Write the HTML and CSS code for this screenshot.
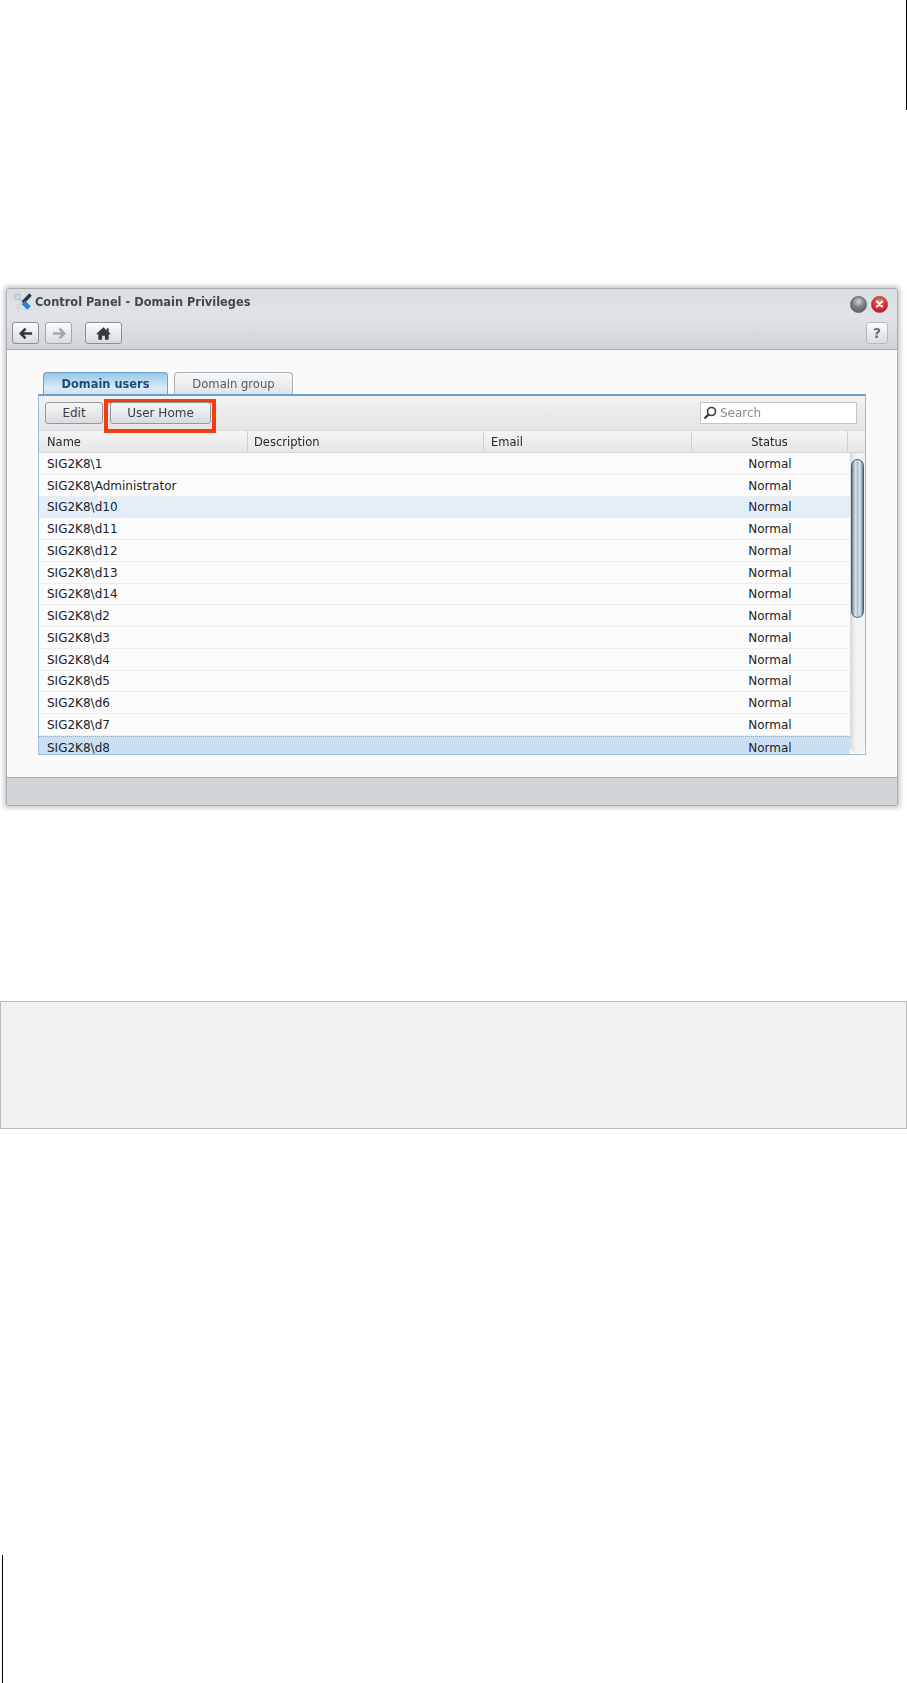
FILE: index.html
```html
<!DOCTYPE html>
<html lang="en">
<head>
<meta charset="utf-8">
<title>Control Panel - Domain Privileges</title>
<link rel="stylesheet" href="styles.css">
</head>
<body>
<div class="top-rule"></div>
<section class="window">
  <header class="chrome">
    <div class="titlebar">
      <svg class="app-icon" viewBox="0 0 18 18" width="18" height="18">
        <path d="M2.500 16.500L8 10.500" stroke="#d5d9dc" stroke-width="2.600" fill="none"/>
        <circle cx="3.800" cy="3.800" r="2.700" fill="none" stroke="#c2c7cb" stroke-width="1.800"/>
        <path d="M5.500 5.500L11 11" stroke="#c8ccd0" stroke-width="2.600"/>
        <path d="M16.500 1.500L9 9.500" stroke="#2e343a" stroke-width="3.400"/>
        <path d="M9.500 9.500L15 15" stroke="#2f7fd0" stroke-width="5"/>
      </svg>
      <span class="title">Control Panel - Domain Privileges</span>
      <span class="orb orb-grey"></span>
      <span class="orb orb-red">
        <svg viewBox="0 0 16 16" width="16" height="16"><path d="M5.200 5.200l5.600 5.600M10.800 5.200l-5.600 5.600" stroke="#fff" stroke-width="2.200" stroke-linecap="round"/></svg>
      </span>
    </div>
    <div class="navbar">
      <button class="nav-btn">
        <svg viewBox="0 0 16 14" width="14" height="13"><path d="M7.500 1.500L2 7l5.500 5.500M2.500 7H15" fill="none" stroke="#33373b" stroke-width="3"/></svg>
      </button>
      <button class="nav-btn nav-off">
        <svg viewBox="0 0 16 14" width="14" height="13"><path d="M8.500 1.500L14 7l-5.500 5.500M13.500 7H1" fill="none" stroke="#a3a8ac" stroke-width="3"/></svg>
      </button>
      <button class="nav-btn nav-home">
        <svg viewBox="0 0 18 15" width="17" height="15"><path d="M9 1L1 8.300h2.500V14h4v-4h3v4h4V8.300H17l-2.500-2.300V2h-2v2.200z" fill="#35393d"/></svg>
      </button>
      <button class="nav-btn nav-help">?</button>
    </div>
  </header>
  <div class="content">
    <div class="tabs">
      <span class="tab tab-on">Domain users</span>
      <span class="tab">Domain group</span>
    </div>
    <div class="panel">
      <div class="toolbar">
        <button class="tool-btn btn-edit">Edit</button>
        <span class="highlight"><button class="tool-btn btn-home">User Home</button></span>
        <label class="search">
          <svg viewBox="0 0 14 14" width="14" height="14"><circle cx="8.500" cy="5.500" r="4" fill="none" stroke="#3c4044" stroke-width="1.700"/><path d="M5.500 8.500L1.500 12.500" stroke="#3c4044" stroke-width="2.400"/></svg>
          <span>Search</span>
        </label>
      </div>
      <div class="grid-head">
        <span class="col col-name">Name</span>
        <span class="col col-desc">Description</span>
        <span class="col col-mail">Email</span>
        <span class="col col-status">Status</span>
        <span class="col col-end"></span>
      </div>
      <div class="grid-body">
        <div class="rows">
          <div class="row"><span class="cell-name">SIG2K8\1</span><span class="cell-status">Normal</span></div>
          <div class="row"><span class="cell-name">SIG2K8\Administrator</span><span class="cell-status">Normal</span></div>
          <div class="row row-hover"><span class="cell-name">SIG2K8\d10</span><span class="cell-status">Normal</span></div>
          <div class="row"><span class="cell-name">SIG2K8\d11</span><span class="cell-status">Normal</span></div>
          <div class="row"><span class="cell-name">SIG2K8\d12</span><span class="cell-status">Normal</span></div>
          <div class="row"><span class="cell-name">SIG2K8\d13</span><span class="cell-status">Normal</span></div>
          <div class="row"><span class="cell-name">SIG2K8\d14</span><span class="cell-status">Normal</span></div>
          <div class="row"><span class="cell-name">SIG2K8\d2</span><span class="cell-status">Normal</span></div>
          <div class="row"><span class="cell-name">SIG2K8\d3</span><span class="cell-status">Normal</span></div>
          <div class="row"><span class="cell-name">SIG2K8\d4</span><span class="cell-status">Normal</span></div>
          <div class="row"><span class="cell-name">SIG2K8\d5</span><span class="cell-status">Normal</span></div>
          <div class="row"><span class="cell-name">SIG2K8\d6</span><span class="cell-status">Normal</span></div>
          <div class="row"><span class="cell-name">SIG2K8\d7</span><span class="cell-status">Normal</span></div>
          <div class="row row-selected"><span class="cell-name">SIG2K8\d8</span><span class="cell-status">Normal</span></div>
        </div>
        <div class="scrollbar"><div class="thumb"></div></div>
      </div>
    </div>
  </div>
  <footer class="statusbar"></footer>
</section>
<div class="note"></div>
<div class="bottom-rule"></div>
</body>
</html>
```
FILE: styles.css
```css
* { box-sizing: border-box; }
html, body { margin: 0; padding: 0; }
body {
  width: 907px;
  height: 1683px;
  background: #fff;
  overflow: hidden;
  font-family: "DejaVu Sans", Verdana, sans-serif;
  color: #1f2328;
  display: flex;
  flex-direction: column;
}
.top-rule {
  width: 1px;
  height: 110px;
  margin: 0 0 0 906px;
  background: #000;
  flex: none;
}
.window {
  flex: none;
  width: 892px;
  height: 518px;
  margin: 178px 0 0 6px;
  border: 1px solid #a9adb0;
  border-radius: 3px 3px 2px 2px;
  box-shadow: 0 0 5px 2px rgba(90, 90, 90, .35);
  background: #fafafa;
  display: flex;
  flex-direction: column;
  overflow: hidden;
  filter: blur(.35px);
}
.chrome {
  flex: none;
  height: 61px;
  padding: 0 9px 0 5px;
  background: linear-gradient(#d8dde1, #e0e4e8 45%, #d0d4d8);
  border-bottom: 1px solid #a8acb0;
}
.titlebar { height: 25px; display: flex; align-items: center; }
.app-icon { margin: 0 3px 0 2px; flex: none; }
.title { font-size: 11.4px; font-weight: bold; color: #40474f; flex: 1; }
.orb {
  width: 17px; height: 17px; border-radius: 50%;
  display: flex; align-items: center; justify-content: center;
  margin-left: 4px; margin-top: 5px;
}
.orb-grey {
  background: radial-gradient(circle at 50% 30%, #d0d4d6, #7b8083 45%, #53585c);
  border: 1px solid #62676a;
}
.orb-red {
  background: radial-gradient(circle at 50% 30%, #ef7b7b, #cc2b2b 60%, #a01c1c);
  border: 1px solid #b43a3a;
}
.navbar { display: flex; align-items: flex-start; gap: 6px; margin-top: 8px; }
.nav-btn {
  width: 27px; height: 22px; padding: 0;
  display: flex; align-items: center; justify-content: center;
  background: linear-gradient(#fafbfb, #d9dcdf);
  border: 1px solid #8b8f93;
  border-radius: 3px;
  font-family: inherit;
}
.nav-off { border-color: #a3a7ab; }
.nav-home { width: 37px; margin-left: 7px; }
.nav-help {
  width: 22px; margin-left: auto;
  border-color: #b7bbbf; color: #666b70;
  font-size: 14px; font-weight: bold;
}
.content { flex: 1; padding: 22px 31px 22px 31px; display: flex; flex-direction: column; min-height: 0; }
.tabs { flex: none; height: 22px; display: flex; align-items: flex-end; gap: 6px; padding-left: 5px; }
.tab {
  height: 22px; width: 119px;
  display: flex; align-items: center; justify-content: center;
  font-size: 11.6px; color: #555c63;
  background: linear-gradient(#f7f8f9, #dfe3e7);
  border: 1px solid #a9b0b6; border-bottom: none;
  border-radius: 4px 4px 0 0;
}
.tab-on {
  width: 125px;
  font-size: 11.4px;
  font-weight: bold; color: #1f4a76;
  background: linear-gradient(#98c6e8, #d9eaf6 70%, #cfe3f3);
  border-color: #6ea0c8;
}
.panel {
  flex: 1; min-height: 0;
  border: 1px solid #9dbcd8;
  border-top: 2px solid #6f9fc8;
  background: #fff;
  display: flex; flex-direction: column;
  overflow: hidden;
}
.toolbar {
  flex: none; height: 34px;
  padding: 6px 8px 0 6px;
  display: flex; align-items: flex-start;
  background: linear-gradient(#f2f2f3, #e4e4e6);
}
.tool-btn {
  height: 22px; padding: 0;
  font-family: inherit; font-size: 12px; color: #3c4147;
  background: linear-gradient(#f4f5f6, #d9dcdf);
  border: 1px solid #94989c;
  border-radius: 3px;
}
.btn-edit { width: 58px; }
.highlight {
  flex: none;
  margin: -3px 0 0 1px;
  width: 112px; height: 34px;
  padding: 0 0 0 2px;
  border: 4px solid #f53b10;
  display: block;
  position: relative;
  z-index: 1;
}
.btn-home { width: 101px; margin-top: -1px; display: block; }
.search {
  margin-left: auto;
  width: 157px; height: 22px;
  display: flex; align-items: center; gap: 3px; padding-left: 2px;
  background: #fff;
  border: 1px solid #c4c6cc;
  font-size: 12px; color: #8a8d90;
}
.grid-head {
  flex: none; height: 23px; display: flex;
  background: linear-gradient(#f5f5f5, #e6e6e6);
  border-top: 1px solid #dcdcdc;
  border-bottom: 1px solid #d4d4d4;
  font-size: 11.5px; color: #23272b;
}
.col {
  display: flex; align-items: center;
  padding-left: 7px;
  border-right: 1px solid #d0d0d0;
  flex: none;
}
.col-name { width: 209px; padding-left: 8px; }
.col-desc { width: 236px; padding-left: 6px; }
.col-mail { width: 208px; }
.col-status { width: 156px; justify-content: center; padding-left: 0; }
.col-end { flex: 1; border-right: none; padding-left: 0; }
.grid-body { flex: 1; min-height: 0; display: flex; overflow: hidden; }
.rows { flex: 1; min-width: 0; background: #fbfbfb; }
.row {
  height: 21.75px;
  display: flex; align-items: center;
  font-size: 12px; color: #20242a;
  border-bottom: 1px solid #ededed;
  padding: 1px 0 0 8px;
}
.cell-name { width: 645px; flex: none; }
.cell-status { width: 156px; flex: none; text-align: center; }
.row-hover { background: #e4eef9; }
.row-selected { background: #cbdff3; border-top: 1px dotted #9aa6b2; border-bottom: none; }
.scrollbar {
  flex: none; width: 15px;
  padding: 6px 1px 0;
  background: linear-gradient(90deg, #d8d8d8, #f4f4f4 40%, #f2f2f2);
  border-radius: 0 0 8px 8px;
}
.thumb {
  height: 159px;
  background: linear-gradient(90deg, #64778b, #b9c8d6 20%, #dce5ee 36%, #a9bacb 50%, #dce5ee 66%, #b6c5d4 82%, #64778b);
  border: 1.5px solid #4a5d70;
  border-radius: 7px;
}
.statusbar { flex: none; height: 28px; background: #d1d5d9; border-top: 1px solid #a7abaf; }
.note {
  flex: none;
  height: 128px;
  margin-top: 195px;
  width: 907px;
  background: #f1f1f1;
  border: 1px solid #bbb;
}
.bottom-rule {
  flex: none;
  width: 1px;
  height: 128px;
  margin: 426px 0 0 2px;
  background: #000;
}
```
